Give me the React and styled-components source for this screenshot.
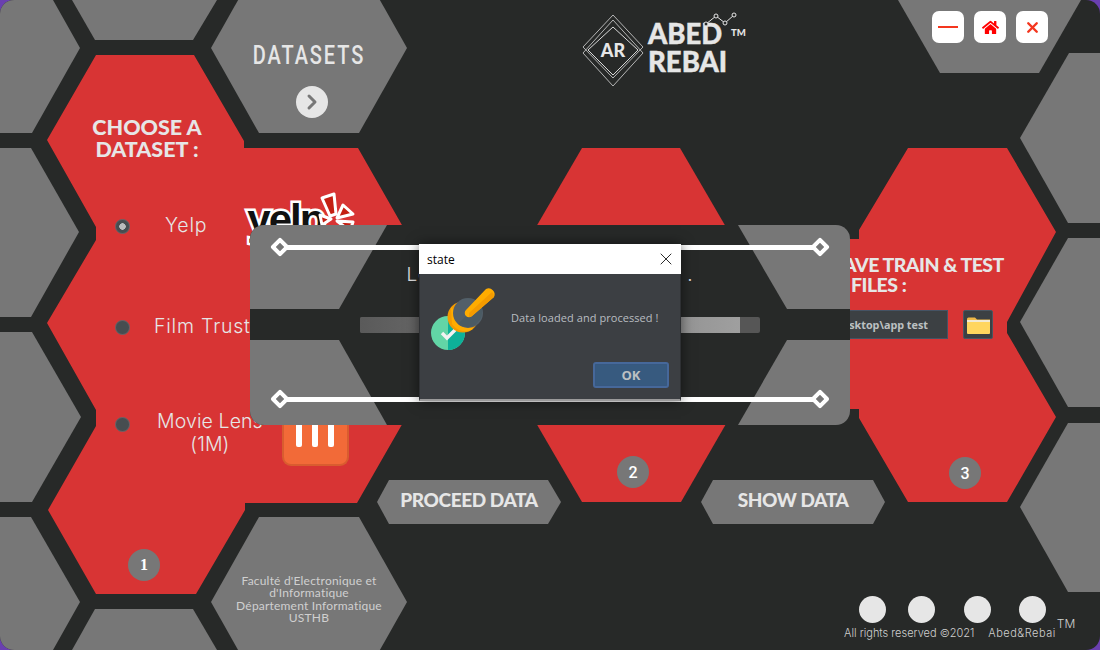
import React from 'react';
import styled, { createGlobalStyle } from 'styled-components';
import { ChevronRight, X } from 'lucide-react';
import { FaHome } from 'react-icons/fa';

const GRAY = '#777777';
const RED = '#d83434';
const DARK = '#272928';
const LIGHT = '#e6e6e6';

const GlobalStyle = createGlobalStyle`
  html, body {
    margin: 0;
    padding: 0;
    background: #6a3fb0;
  }
`;

// clip-path cell, the box comes from the points of the shape
const minOf = (pts, i) => Math.min(...pts.map((p) => p[i]));
const maxOf = (pts, i) => Math.max(...pts.map((p) => p[i]));

const Cell = styled.div`
  position: absolute;
  left: ${(p) => minOf(p.$pts, 0)}px;
  top: ${(p) => minOf(p.$pts, 1)}px;
  width: ${(p) => maxOf(p.$pts, 0) - minOf(p.$pts, 0)}px;
  height: ${(p) => maxOf(p.$pts, 1) - minOf(p.$pts, 1)}px;
  background: ${(p) => p.$fill || GRAY};
  clip-path: polygon(${(p) =>
    p.$pts.map(([x, y]) => `${x - minOf(p.$pts, 0)}px ${y - minOf(p.$pts, 1)}px`).join(', ')});
  display: flex;
  flex-direction: column;
`;

const Window = styled.div`
  position: relative;
  width: 1100px;
  height: 650px;
  background: ${DARK};
  border-radius: 14px;
  overflow: hidden;
  display: flex;
  flex-direction: column;
  font-family: 'Lato', 'Liberation Sans', sans-serif;
`;

const TopBar = styled.div`
  position: relative;
  display: flex;
  justify-content: space-between;
  padding: 11px 52px 0 582px;
  height: 78px;
`;

const Logo = styled.div`
  display: flex;
  align-items: flex-start;
`;

const LogoMark = styled.div`
  position: relative;
  width: 62px;
  height: 74px;
  margin-top: 3px;
  display: flex;
  align-items: center;
  justify-content: center;
  svg {
    position: absolute;
    inset: 0;
  }
`;

const LogoInitials = styled.span`
  color: ${LIGHT};
  font-weight: 900;
  font-size: 18px;
  margin-top: -2px;
`;

const LogoWords = styled.div`
  position: relative;
  margin: 9px 0 0 4px;
  color: ${LIGHT};
  font-weight: 900;
  font-size: 27.5px;
  line-height: 28px;
  -webkit-text-stroke: 0.4px ${LIGHT};
  svg {
    position: absolute;
    left: 55px;
    top: -9px;
  }
`;

const LogoTm = styled.span`
  position: absolute;
  left: 83px;
  top: 8px;
  font-size: 9.5px;
  line-height: 10px;
  -webkit-text-stroke: 0;
`;

const WindowButtons = styled.div`
  display: flex;
  gap: 10px;
`;

const WindowButton = styled.button`
  width: 32px;
  height: 32px;
  border: 0;
  padding: 0;
  border-radius: 7px;
  background: #fff;
  color: #f00;
  display: flex;
  align-items: center;
  justify-content: center;
`;

const MinusBar = styled.span`
  width: 20px;
  height: 2px;
  background: #f4361e;
`;

const Datasets = styled.div`
  margin-top: 83px;
  text-align: center;
  color: ${LIGHT};
  font-family: 'Roboto', sans-serif;
  font-weight: 500;
  font-size: 25px;
  line-height: 20px;
  letter-spacing: 2.4px;
  transform: scaleX(0.8);
`;

const ChevronDisc = styled.div`
  align-self: center;
  margin: 20px 0 0 6px;
  width: 32px;
  height: 32px;
  border-radius: 50%;
  background: ${LIGHT};
  color: ${GRAY};
  display: flex;
  align-items: center;
  justify-content: center;
`;

const Faculty = styled.div`
  margin-top: 58px;
  text-align: center;
  color: #d0d0d0;
  font-weight: 400;
  font-size: 12px;
  line-height: 12.4px;
  letter-spacing: 0.2px;
`;

const ActionLabel = styled.div`
  text-align: center;
  color: ${LIGHT};
  font-weight: 900;
  font-size: 19px;
  line-height: 40px;
  letter-spacing: -0.4px;
`;

const DatasetColumn = styled.div`
  padding: 61px 0 0 68px;
`;

const PanelTitle = styled.div`
  color: ${LIGHT};
  font-weight: 900;
  font-size: 21.5px;
  line-height: 22px;
`;

const ChooseTitle = styled(PanelTitle)`
  width: 150px;
  margin-left: -43px;
  text-align: center;
`;

const DatasetRow = styled.div`
  display: flex;
  align-items: center;
  height: ${(p) => p.$height}px;
  margin-top: ${(p) => p.$top}px;
`;

const Radio = styled.span`
  flex: none;
  width: 15px;
  height: 15px;
  margin-top: ${(p) => p.$shift || 0}px;
  border-radius: 50%;
  box-sizing: border-box;
  border: 1px solid #5d666b;
  background: radial-gradient(circle, ${(p) => (p.$checked ? '#b9bcbd 0 3px' : '#474d50 0 3px')}, #474d50 3.5px);
`;

const DatasetLabel = styled.span`
  margin-left: ${(p) => p.$indent}px;
  margin-top: ${(p) => p.$lift}px;
  flex: none;
  text-align: center;
  color: ${LIGHT};
  font-family: 'Inter', sans-serif;
  font-weight: 300;
  font-size: 19.5px;
  line-height: 23px;
  letter-spacing: ${(p) => p.$spacing}px;
`;

const YelpLogo = styled.div`
  position: relative;
  flex: none;
  align-self: flex-start;
  width: 112px;
  height: 54px;
  margin-left: 38px;
  svg {
    position: absolute;
    inset: 0;
  }
`;

const YelpWord = styled.span`
  position: absolute;
  left: 2px;
  top: 8px;
  font-family: 'Liberation Sans', sans-serif;
  font-weight: 700;
  font-size: 42px;
  line-height: 42px;
  letter-spacing: -2px;
  color: #111;
  -webkit-text-stroke: 5px #fff;
  paint-order: stroke fill;
`;

const LensLogo = styled.div`
  flex: none;
  width: 67px;
  height: 68px;
  margin-left: 19px;
  box-sizing: border-box;
  background: #f26a38;
  border: 2px solid #d95c2f;
  border-top: 0;
  border-radius: 9px;
  display: flex;
  justify-content: center;
  gap: 10px;
  padding-top: 25px;
`;

const LensBar = styled.span`
  width: 6px;
  height: 24px;
  background: #fff;
  border-radius: 0 0 2px 2px;
`;

const StepBadge = styled.div`
  width: 32px;
  height: 32px;
  border-radius: 50%;
  background: ${GRAY};
  color: #fff;
  display: flex;
  align-items: center;
  justify-content: center;
  font-family: ${(p) => (p.$serif ? "'Liberation Serif', serif" : "'Roboto', sans-serif")};
  font-weight: ${(p) => (p.$serif ? 700 : 500)};
  font-size: 16px;
`;

const FirstBadge = styled(StepBadge)`
  margin: 83px 0 0 13px;
`;

const CenterColumn = styled.div`
  height: 100%;
  box-sizing: border-box;
  display: flex;
  flex-direction: column;
  align-items: center;
  justify-content: flex-end;
  padding: 0 0 14px 0;
`;

const CenterBadge = styled(StepBadge)`
  margin-left: 4px;
`;

const SaveColumn = styled.div`
  height: 100%;
  box-sizing: border-box;
  padding: 106px 0 0 33px;
  display: flex;
  flex-direction: column;
`;

const SaveTitle = styled(PanelTitle)`
  font-size: 19.5px;
  line-height: 21px;
  letter-spacing: -0.5px;
  white-space: nowrap;
`;

const SaveSecondLine = styled.span`
  display: block;
  margin: -1px 0 0 18px;
`;

const PathRow = styled.div`
  display: flex;
  gap: 15px;
  margin: 15px 0 0 -33px;
`;

const PathInput = styled.input`
  width: 148px;
  height: 29px;
  box-sizing: border-box;
  background: #3c4043;
  border: 1px solid #455364;
  color: #bcc0c2;
  padding: 0 19px 0 0;
  text-align: right;
  font-family: 'Open Sans', sans-serif;
  font-weight: 700;
  font-size: 10.8px;
  outline: none;
`;

const FolderButton = styled.button`
  width: 30px;
  height: 29px;
  padding: 0;
  box-sizing: border-box;
  background: #3c4043;
  border: 1px solid #4a5561;
  border-radius: 2px;
  display: flex;
  align-items: center;
  justify-content: center;
`;

const SaveBadge = styled(StepBadge)`
  margin-top: auto;
  margin-bottom: 13px;
  margin-left: 116px;
`;

const Footer = styled.div`
  position: relative;
  margin: auto 25px 10px auto;
  width: 231px;
  color: #cfcfcf;
  font-family: 'Inter', sans-serif;
  font-weight: 300;
  font-size: 11px;
  line-height: 14px;
`;

const FooterDots = styled.div`
  display: flex;
  padding-left: 15px;
`;

const FooterDot = styled.span`
  width: 27px;
  height: 27px;
  border-radius: 50%;
  background: ${LIGHT};
  margin-left: ${(p) => p.$gap}px;
`;

const FooterLine = styled.div`
  display: flex;
  align-items: flex-end;
  gap: 14px;
  margin-top: -6px;
  white-space: nowrap;
`;

const FooterBrand = styled.span`
  letter-spacing: 0.5px;
`;

const FooterTm = styled.span`
  margin: 0 0 9px -13px;
  font-size: 12px;
`;

const LoadPanel = styled.div`
  position: absolute;
  left: 250px;
  top: 225px;
  width: 600px;
  height: 200px;
  box-sizing: border-box;
  padding: 12px 20px 16px;
  border-radius: 14px;
  overflow: hidden;
  background: ${DARK};
  display: flex;
  flex-direction: column;
  align-items: center;
`;

const Rail = styled.div`
  position: relative;
  align-self: stretch;
  height: 20px;
  margin-top: ${(p) => (p.$bottom ? 'auto' : '0')};
  display: flex;
  align-items: center;
`;

const RailLine = styled.span`
  flex: 1;
  height: 5px;
  margin: 0 -3px;
  background: #fff;
`;

const RailKnob = styled.span`
  flex: none;
  width: 14px;
  height: 14px;
  margin: 0 3px;
  box-sizing: border-box;
  border: 4px solid #fff;
  border-radius: 2px;
  background: ${GRAY};
  transform: rotate(45deg);
`;

const StatusText = styled.div`
  position: relative;
  margin-top: 6px;
  color: #e0e0e0;
  font-family: 'Inter', sans-serif;
  font-weight: 300;
  font-size: 19px;
  line-height: 24px;
  letter-spacing: 0.7px;
  white-space: nowrap;
`;

const Progress = styled.div`
  position: relative;
  width: 400px;
  height: 16px;
  margin: 30px 0 0 20px;
  border-radius: 2px;
  background: #565656;
  overflow: hidden;
`;

const ProgressFill = styled.div`
  height: 100%;
  background: linear-gradient(90deg, #5a5a5a, #9f9f9f);
`;

const Dialog = styled.div`
  position: absolute;
  left: 419px;
  top: 244px;
  width: 262px;
  height: 157px;
  box-sizing: border-box;
  background: #3c3f43;
  border: 1px solid #2e3033;
  border-top: 0;
  border-bottom: 2px solid #9a9a9a;
  box-shadow: 0 0 12px rgba(0, 0, 0, 0.55);
  display: flex;
  flex-direction: column;
  font-family: 'Open Sans', sans-serif;
`;

const DialogTitle = styled.div`
  height: 30px;
  flex: none;
  margin: 0 -1px;
  padding: 0 5px 0 8px;
  background: #fff;
  color: #000;
  font-size: 12px;
  display: flex;
  align-items: center;
  justify-content: space-between;
`;

const DialogBody = styled.div`
  display: flex;
  align-items: center;
  padding: 6px 0 0 5px;
`;

const DialogMessage = styled.span`
  margin-left: 6px;
  color: #b9bdc1;
  font-size: 11px;
  letter-spacing: 0.06px;
  white-space: nowrap;
`;

const OkButton = styled.button`
  align-self: flex-end;
  margin: 7px 11px 0 0;
  width: 76px;
  height: 26px;
  box-sizing: border-box;
  border: 2px solid #46689a;
  outline: 1px solid #37587f;
  outline-offset: -3px;
  border-radius: 3px;
  background: #375a7f;
  color: #bcc0c2;
  font-family: 'Open Sans', sans-serif;
  font-weight: 700;
  font-size: 13px;
`;

const grayCells = [
  [[-10, 0], [53, 0], [80, 48], [32, 133], [-10, 133]],
  [[-10, 148], [31, 148], [79, 232], [31, 317], [-10, 317]],
  [[-10, 332], [32, 332], [81, 417], [32, 502], [-10, 502]],
  [[-10, 517], [31, 517], [80, 602], [53, 650], [-10, 650]],
  [[72, 0], [217, 0], [193, 40], [95, 40]],
  [[95, 609], [193, 609], [217, 650], [72, 650]],
  [[898, 0], [1081, 0], [1039, 73], [940, 73]],
  [[1069, 53], [1110, 53], [1110, 223], [1068, 223], [1020, 138]],
  [[1068, 238], [1110, 238], [1110, 407], [1068, 407], [1020, 322]],
  [[1068, 423], [1110, 423], [1110, 592], [1068, 592], [1020, 507]],
];

const datasetsHex = [[259, -37], [359, -37], [407, 48], [359, 133], [259, 133], [211, 48]];
const facultyHex = [[259, 517], [359, 517], [407, 602], [359, 687], [259, 687], [211, 602]];
const proceedHex = [[389, 480], [548, 480], [561, 502], [548, 524], [389, 524], [377, 502]];
const showHex = [[713, 480], [873, 480], [885, 502], [873, 524], [713, 524], [701, 502]];

const datasetRed = [
  [96, 55], [194, 55], [244, 141], [244, 148], [358, 148], [459, 325], [357, 503], [245, 503],
  [245, 510], [196, 594], [96, 594], [48, 510], [96, 426], [96, 410], [47, 323], [96, 240],
  [96, 227], [47, 140],
];
const centerRed = [[582, 148], [680, 148], [783, 325], [681, 502], [582, 502], [479, 325]];
const saveRed = [
  [908, 148], [1007, 148], [1056, 232], [1007, 322], [1007, 333], [1056, 417], [1007, 502],
  [908, 502], [859, 418], [859, 409], [800, 409], [800, 239], [859, 239], [859, 230],
];

const panelCorners = [
  [[0, 0], [137, 0], [89, 84], [0, 84]],
  [[0, 115], [89, 115], [137, 200], [0, 200]],
  [[488, 0], [600, 0], [600, 84], [537, 84]],
  [[537, 115], [600, 115], [600, 200], [488, 200]],
];

function LogoDiamonds() {
  return (
    <svg width="62" height="74" viewBox="0 0 62 74" fill="none" stroke="#d8d8d8" strokeWidth="0.8">
      <polygon points="31,1 61,33 31,64 1,33" />
      <polygon points="31,6 61,39 31,72 1,39" />
      <polygon points="31,13 56,36 31,61 6,36" strokeWidth="1" />
    </svg>
  );
}

function LogoChart() {
  return (
    <svg width="36" height="16" viewBox="0 0 36 16" fill="none" stroke="#e6e6e6" strokeWidth="1">
      <polyline points="3,13 13,5 22,12 31,4" />
      <circle cx="3" cy="13" r="2" fill="#272928" />
      <circle cx="13" cy="5" r="2" fill="#272928" />
      <circle cx="22" cy="12" r="2" fill="#272928" />
      <circle cx="31" cy="4" r="2" fill="#272928" />
    </svg>
  );
}

function YelpBurst() {
  return (
    <svg width="112" height="54" viewBox="0 0 112 54" fill="#c41f12" stroke="#fff" strokeWidth="3" strokeLinejoin="round">
      <polygon points="77,7 89,3 91,23 85,25" />
      <polygon points="98,14 108,23 92,27" />
      <polygon points="92,30 108,31 105,40" />
      <polygon points="75,24 86,28 77,34" />
    </svg>
  );
}

function BrushIcon() {
  return (
    <svg width="80" height="75" viewBox="0 0 80 75">
      <circle cx="23" cy="53" r="17" fill="#62d5a6" />
      <path d="M23 36 a17 17 0 0 1 0 34 Z" fill="#0db199" />
      <path d="M17 53 l5 5 l9 -9" fill="none" stroke="#f2f2f2" strokeWidth="3.4" />
      <circle cx="38" cy="37" r="15.5" fill="#f49b00" />
      <path d="M26 27 L27 44 A15.5 15.5 0 0 0 48 49 Z" fill="#ffac00" />
      <circle cx="43" cy="33" r="15" fill="#525f69" />
      <path d="M54 23 a15 15 0 0 1 -21 21 Z" fill="#4b5b64" />
      <path d="M41 30 L61 9 A6 6 0 0 1 69 17 L47 36 A3.5 3.5 0 0 1 41 30 Z" fill="#ffac00" />
      <path d="M44 33 L67 12 A6 6 0 0 1 69 17 L47 36 A3.5 3.5 0 0 1 44 37 Z" fill="#f49b00" />
    </svg>
  );
}

function FolderIcon() {
  return (
    <svg width="25" height="20" viewBox="0 0 25 20">
      <path d="M1 4 a1.5 1.5 0 0 1 1.5 -1.5 H9 l2 2 H24 V8 H1 Z" fill="#f0b848" />
      <rect x="1" y="5" width="23" height="2" fill="#f2ead2" />
      <path d="M1 7 H24 V18 a1 1 0 0 1 -1 1 H2 a1 1 0 0 1 -1 -1 Z" fill="#ffd65e" />
    </svg>
  );
}

export default function App() {
  return (
    <Window>
      <GlobalStyle />

      {grayCells.map((pts, i) => (
        <Cell key={i} $pts={pts} />
      ))}

      <Cell $pts={datasetsHex}>
        <Datasets>DATASETS</Datasets>
        <ChevronDisc>
          <ChevronRight size={24} strokeWidth={3} />
        </ChevronDisc>
      </Cell>

      <Cell $pts={facultyHex}>
        <Faculty>
          Faculté d'Electronique et
          <br />
          d'Informatique
          <br />
          Département Informatique
          <br />
          USTHB
        </Faculty>
      </Cell>

      <Cell $pts={datasetRed} $fill={RED}>
        <DatasetColumn>
          <ChooseTitle>
            CHOOSE A
            <br />
            DATASET :
          </ChooseTitle>
          <DatasetRow $height={70} $top={31}>
            <Radio $checked />
            <DatasetLabel $indent={35} $spacing={0.8} $lift={-2}>Yelp</DatasetLabel>
            <YelpLogo>
              <YelpWord>yelp</YelpWord>
              <YelpBurst />
            </YelpLogo>
          </DatasetRow>
          <DatasetRow $height={70} $top={31}>
            <Radio />
            <DatasetLabel $indent={24} $spacing={0.8} $lift={-1}>Film Trust</DatasetLabel>
          </DatasetRow>
          <DatasetRow $height={68} $top={36}>
            <Radio $shift={-16} />
            <DatasetLabel $indent={27} $spacing={0.1} $lift={1}>
              Movie Lens
              <br />
              (1M)
            </DatasetLabel>
            <LensLogo>
              <LensBar />
              <LensBar />
              <LensBar />
            </LensLogo>
          </DatasetRow>
          <FirstBadge $serif>1</FirstBadge>
        </DatasetColumn>
      </Cell>

      <Cell $pts={centerRed} $fill={RED}>
        <CenterColumn>
          <CenterBadge>2</CenterBadge>
        </CenterColumn>
      </Cell>

      <Cell $pts={saveRed} $fill={RED}>
        <SaveColumn>
          <SaveTitle>
            SAVE TRAIN &amp; TEST
            <SaveSecondLine>FILES :</SaveSecondLine>
          </SaveTitle>
          <PathRow>
            <PathInput readOnly value="Desktop\app test" />
            <FolderButton>
              <FolderIcon />
            </FolderButton>
          </PathRow>
          <SaveBadge>3</SaveBadge>
        </SaveColumn>
      </Cell>

      <Cell $pts={proceedHex}>
        <ActionLabel>PROCEED DATA</ActionLabel>
      </Cell>
      <Cell $pts={showHex}>
        <ActionLabel>SHOW DATA</ActionLabel>
      </Cell>

      <TopBar>
        <Logo>
          <LogoMark>
            <LogoDiamonds />
            <LogoInitials>AR</LogoInitials>
          </LogoMark>
          <LogoWords>
            <LogoChart />
            <LogoTm>TM</LogoTm>
            ABED
            <br />
            REBAI
          </LogoWords>
        </Logo>
        <WindowButtons>
          <WindowButton>
            <MinusBar />
          </WindowButton>
          <WindowButton>
            <FaHome size={17} />
          </WindowButton>
          <WindowButton>
            <X size={17} strokeWidth={3.4} color="#f4361e" />
          </WindowButton>
        </WindowButtons>
      </TopBar>

      <Footer>
        <FooterDots>
          <FooterDot $gap={0} />
          <FooterDot $gap={22} />
          <FooterDot $gap={29} />
          <FooterDot $gap={28} />
        </FooterDots>
        <FooterLine>
          <span>All rights reserved ©2021</span>
          <FooterBrand>Abed&amp;Rebai</FooterBrand>
          <FooterTm>TM</FooterTm>
        </FooterLine>
      </Footer>

      <LoadPanel>
        {panelCorners.map((pts, i) => (
          <Cell key={i} $pts={pts} />
        ))}
        <Rail>
          <RailKnob />
          <RailLine />
          <RailKnob />
        </Rail>
        <StatusText>Loading and processing data .</StatusText>
        <Progress>
          <ProgressFill style={{ width: `${(380 / 400) * 100}%` }} />
        </Progress>
        <Rail $bottom>
          <RailKnob />
          <RailLine />
          <RailKnob />
        </Rail>
      </LoadPanel>

      <Dialog>
        <DialogTitle>
          state
          <X size={20} strokeWidth={1} color="#000" />
        </DialogTitle>
        <DialogBody>
          <BrushIcon />
          <DialogMessage>Data loaded and processed !</DialogMessage>
        </DialogBody>
        <OkButton>OK</OkButton>
      </Dialog>
    </Window>
  );
}
